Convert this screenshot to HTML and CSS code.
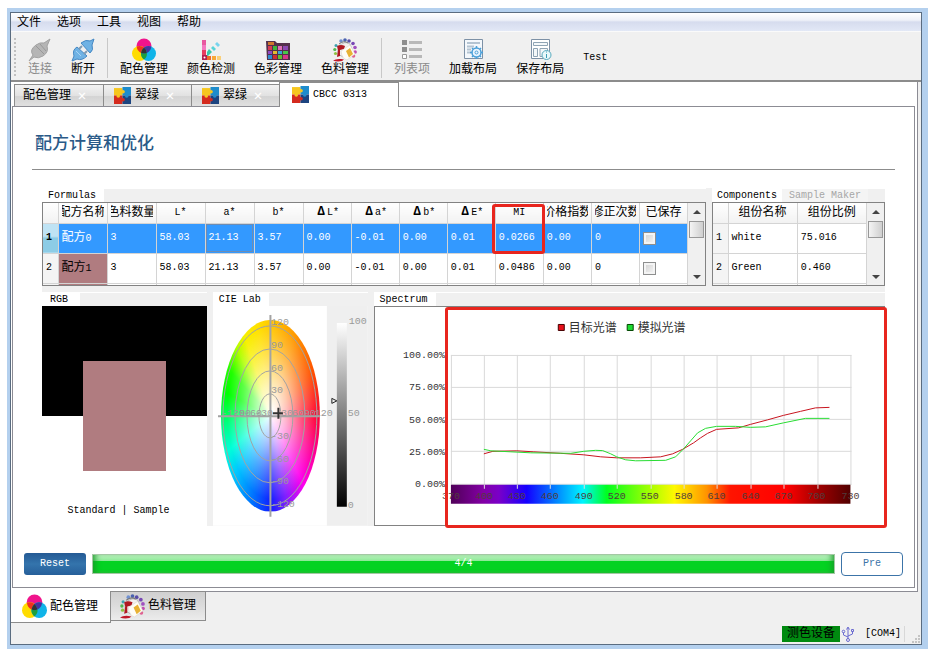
FILE: index.html
```html
<!DOCTYPE html>
<html lang="zh-CN">
<head>
<meta charset="utf-8">
<title>配色管理</title>
<link rel="stylesheet" href="styles.css">
</head>
<body>
<svg class="defs" width="0" height="0" aria-hidden="true">
  <symbol id="rgb" viewBox="0 0 24 24">
    <circle cx="12" cy="8" r="7.5" fill="#f0148c"/>
    <circle cx="7.5" cy="15.5" r="7.5" fill="#ffdc00"/>
    <circle cx="16.500" cy="15.500" r="7.500" fill="#10b4e8"/>
    <path d="M4.800 8.500A7.500 7.500 0 0 1 12 9.500 7.500 7.500 0 0 0 9.100 14.900 7.500 7.500 0 0 1 4.800 8.500z" fill="#f0321e"/>
    <path d="M19.200 8.500A7.500 7.500 0 0 0 12 9.500 7.500 7.500 0 0 1 14.900 14.900 7.500 7.500 0 0 0 19.200 8.500z" fill="#4632a0"/>
    <path d="M9.100 14.900A7.500 7.500 0 0 0 12 21.500 7.500 7.500 0 0 0 14.900 14.900 7.500 7.500 0 0 1 9.100 14.900z" fill="#1ea03c"/>
    <path d="M12 9.500A7.500 7.500 0 0 1 14.900 14.900 7.500 7.500 0 0 1 9.100 14.900 7.500 7.500 0 0 1 12 9.500z" fill="#333"/>
  </symbol>
  <symbol id="puzzle" viewBox="0 0 16 16">
    <path d="M0 1h8v7H0z" fill="#f6c61e"/>
    <path d="M8 0h8v8H8z" fill="#1e8ccc"/>
    <path d="M0 8h8v8H0z" fill="#d42a1e"/>
    <path d="M8 8h8v8H8z" fill="#1c4480"/>
    <circle cx="8.500" cy="4.500" r="1.700" fill="#f6c61e"/>
    <circle cx="12" cy="8.500" r="1.700" fill="#1e8ccc"/>
    <circle cx="4" cy="8.500" r="1.700" fill="#f6c61e"/>
    <circle cx="8.500" cy="12" r="1.700" fill="#d42a1e"/>
  </symbol>
  <symbol id="paint" viewBox="0 0 24 24">
    <g><circle cx="8" cy="3" r="1.800" fill="#7090d0"/><circle cx="12" cy="2" r="1.800" fill="#4a62b0"/><circle cx="16" cy="3" r="1.800" fill="#584ca8"/><circle cx="20" cy="5.500" r="1.800" fill="#7848b4"/><circle cx="22" cy="9.500" r="1.800" fill="#a050c0"/><circle cx="22.200" cy="14" r="1.700" fill="#c44cb0"/><circle cx="20.500" cy="18" r="1.800" fill="#e06090"/><circle cx="3" cy="7.500" r="1.500" fill="#40a0b0"/><circle cx="1.800" cy="11.500" r="1.600" fill="#50b850"/><circle cx="2.500" cy="15.500" r="1.600" fill="#90c040"/></g>
    <path d="M5 9q7-7 12-3l2 5-9 8-5-3z" fill="#f2f0ee" stroke="#999" stroke-width=".6"/>
    <path d="M4 8q4-2 8 0l-1 3-4 1v6l-3 1 1-7z" fill="#b01822"/>
    <path d="M8 13l9-6 5 9-8 6q-5-1-6-9z" fill="#fffdf6" stroke="#d4d0c8" stroke-width=".5"/>
    <path d="M13 13l4-3 3 6-4 3.500z" fill="#e8b234"/>
    <path d="M0 22.500q3-2 8-1.500l3 .5-2 1.500q-5 1-9-.5z" fill="#c01828"/>
    <path d="M6 6q5-4 9-1" fill="none" stroke="#777"/>
  </symbol>
</svg>

<div class="window">
  <nav class="menubar">
    <button>文件</button><button>选项</button><button>工具</button><button>视图</button><button>帮助</button>
  </nav>

  <div class="toolbar">
    <span class="handle"></span>
    <button class="tool" disabled>
      <svg viewBox="0 0 24 24"><path d="M1 23l4-6q-4-5 3-10 4-3 8-2l6-4-3 7q2 6-4 10-5 3-9 1z" fill="#b5b5b5" stroke="#a2a2a2"/><path d="M8 8l8 8M12 6l6 7" stroke="#989898"/></svg>
      连接</button>
    <button class="tool">
      <svg viewBox="0 0 24 24"><path d="M1 23l2-5q-2-6 3-9l10 9q-5 5-10 3z" fill="#6fb2e4" stroke="#4588c4"/><path d="M23 1l-2 6q2 5-2 8L10 5q5-4 9-2z" fill="#6fb2e4" stroke="#4588c4"/><path d="M8 11l3-3M13 16l3-3" stroke="#7f9cb5" stroke-width="2"/><path d="M5 13l5 5" stroke="#a8d4f4"/></svg>
      断开</button>
    <span class="sep"></span>
    <button class="tool"><svg><use href="#rgb"/></svg>配色管理</button>
    <button class="tool">
      <svg viewBox="0 0 24 24"><path d="M3 2h4v5H3z" fill="#e858a0"/><path d="M3 7h4v5H3z" fill="#f478c0"/><path d="M3 12h4v5H3z" fill="#e83c60"/><path d="M3 17h5v5H3z" fill="#b41e50"/><path d="M8 14l2-3 3 3-4 4H8z" fill="#3cc8a8"/><path d="M12 10l2-2 3 3-2 2z" fill="#58d4d8"/><path d="M16 6l2-2 3 3-2 2z" fill="#78d4ee"/><path d="M8 18h4v4H8z" fill="#f06c28"/><path d="M13 18h4v4h-4z" fill="#f8a838"/><path d="M18 18h4v4h-4z" fill="#fad07a"/><circle cx="5.500" cy="19.500" r="1" fill="#fff"/></svg>
      颜色检测</button>
    <button class="tool">
      <svg viewBox="0 0 24 24"><path d="M0 3h9l2 2h13v17H1z" fill="#54304c"/><path d="M2 4h6v3H2z" fill="#d0782c"/><path d="M2 8h4v4H2z" fill="#d83c54"/><path d="M7 8h4v4H7z" fill="#3cb83c"/><path d="M12 8h4v4h-4z" fill="#e070b8"/><path d="M17 8h5v4h-5z" fill="#8c48b4"/><path d="M2 13h4v3H2z" fill="#9048c0"/><path d="M7 13h4v3H7z" fill="#e0bc30"/><path d="M12 13h4v3h-4z" fill="#38a8d8"/><path d="M17 13h5v3h-5z" fill="#48c848"/><path d="M2 17h4v4H2z" fill="#308cd0"/><path d="M7 17h4v4H7z" fill="#cc3030"/><path d="M12 17h4v4h-4z" fill="#60c030"/><path d="M17 17h5v4h-5z" fill="#d83888"/></svg>
      色彩管理</button>
    <button class="tool"><svg><use href="#paint"/></svg>色料管理</button>
    <span class="sep"></span>
    <button class="tool" disabled>
      <svg viewBox="0 0 24 24"><path d="M2 2h5v5H2zM2 9h5v5H2z" fill="#8e8e8e"/><path d="M2.500 16.500h4v4h-4z" fill="#fff" stroke="#999"/><path d="M9 4.500h13M9 11.500h13M9 18.500h13" stroke="#b8b8b8" stroke-width="3"/></svg>
      列表项</button>
    <button class="tool">
      <svg viewBox="0 0 24 24"><path d="M3.500 1.500h18v19h-18z" fill="#f4f8fc" stroke="#7d91a6"/><path d="M6 5h13M6 8.500h7M6 11.500h4M6 14.500h4" stroke="#b4c4d2" stroke-width="2"/><circle cx="15.500" cy="14.500" r="4.500" fill="#eaf5ff" stroke="#4a9fd8" stroke-width="1.500"/><circle cx="15.500" cy="14.500" r="1.500" fill="none" stroke="#4a9fd8"/><path d="M15.500 8v2M15.500 19v2M9 14.500h2M20 14.500h2M11 10l1 1M19 18l1 1M20 10l-1 1M11 19l1-1" stroke="#4a9fd8" stroke-width="1.500"/></svg>
      加载布局</button>
    <button class="tool">
      <svg viewBox="0 0 24 24"><path d="M3.500 1.500h18v19h-18z" fill="#fff" stroke="#7d91a6"/><path d="M5.500 4.500h14v3h-14zM5.500 10.500h4v8h-4zM12 10.500h7.500v8H12z" fill="#f4f8fa" stroke="#8fa4b4"/><circle cx="18.500" cy="17" r="4.500" fill="#e8f8fa" stroke="#58aabe"/><path d="M18.500 16v4M18.500 13.500v1" stroke="#3c9cb4"/></svg>
      保存布局</button>
    <button class="tool en">Test</button>
  </div>

  <div class="outer">
    <div class="tabs">
      <button class="tab text-only">配色管理<i>✕</i></button>
      <button class="tab"><svg><use href="#puzzle"/></svg>翠绿<i>✕</i></button>
      <button class="tab"><svg><use href="#puzzle"/></svg>翠绿<i>✕</i></button>
      <button class="tab active"><svg><use href="#puzzle"/></svg><span class="en">CBCC 0313</span></button>
    </div>

    <main class="pane">
      <h1>配方计算和优化</h1>
      <div class="dock">
        <div class="dock-row">
          <section class="formulas">
            <h2><span>Formulas</span></h2>
            <div class="frame">
              <table>
                <colgroup><col class="c-num"><col class="c-wide"><col class="c-wide"><col class="c-wide"><col class="c-wide"><col class="c-wide"><col><col><col><col><col><col><col><col></colgroup>
                <thead><tr><th></th><th class="zh"><div>配方名称</div></th><th class="zh"><div>色料数量</div></th><th>L*</th><th>a*</th><th>b*</th><th><b class="delta">Δ</b>L*</th><th><b class="delta">Δ</b>a*</th><th><b class="delta">Δ</b>b*</th><th><b class="delta">Δ</b>E*</th><th class="marked">MI<span class="mark"></span></th><th class="zh"><div>价格指数</div></th><th class="zh"><div>修正次数</div></th><th class="zh"><div>已保存</div></th></tr></thead>
                <tbody>
                  <tr class="selected"><th>1</th><td><span class="zh">配方</span>0</td><td>3</td><td>58.03</td><td class="current">21.13</td><td>3.57</td><td>0.00</td><td>-0.01</td><td>0.00</td><td>0.01</td><td>0.0266</td><td>0.00</td><td>0</td><td><input type="checkbox" aria-label="已保存 配方0"></td></tr>
                  <tr><th>2</th><td class="swatch"><span class="zh">配方</span>1</td><td>3</td><td>58.03</td><td>21.13</td><td>3.57</td><td>0.00</td><td>-0.01</td><td>0.00</td><td>0.01</td><td>0.0486</td><td>0.00</td><td>0</td><td><input type="checkbox" aria-label="已保存 配方1"></td></tr>
                  <tr class="cut"><th></th><td class="swatch"></td><td></td><td></td><td></td><td></td><td></td><td></td><td></td><td></td><td></td><td></td><td></td><td></td></tr>
                </tbody>
              </table>
              <div class="scroll"><b class="up"></b><b class="thumb"></b><b class="down"></b></div>
            </div>
          </section>
          <section class="components">
            <h2><span>Components</span><span class="off">Sample Maker</span></h2>
            <div class="frame">
              <table>
                <colgroup><col class="c-num"><col><col></colgroup>
                <thead><tr><th></th><th class="zh">组份名称</th><th class="zh">组份比例</th></tr></thead>
                <tbody>
                  <tr><th>1</th><td>white</td><td>75.016</td></tr>
                  <tr><th>2</th><td>Green</td><td>0.460</td></tr>
                  <tr class="cut"><th></th><td></td><td></td></tr>
                </tbody>
              </table>
              <div class="scroll"><b class="up"></b><b class="thumb"></b><b class="down"></b></div>
            </div>
          </section>
        </div>

        <div class="dock-row">
          <section class="rgb">
            <h2><span>RGB</span></h2>
            <div class="rgb-body">
              <div class="standard"></div>
              <div class="sample"></div>
              <p>Standard | Sample</p>
            </div>
          </section>
          <section class="lab">
            <h2><span>CIE Lab</span></h2>
            <svg class="lab-chart" viewBox="0 0 155 220">
              <defs><linearGradient id="lum" x2="0" y2="1"><stop offset="0" stop-color="#fff"/><stop offset="1" stop-color="#000"/></linearGradient></defs>
              <path d="M0 0h155v220H0z" fill="#fff"/>
              <path d="M114 0h41v220h-41z" fill="#efefef"/>
              <g transform="translate(8 14) scale(.516 1)"><foreignObject width="192" height="192"><div class="wheel"></div></foreignObject></g>
              <g fill="none" stroke="#a3a3a3">
                <ellipse cx="57" cy="110" rx="11" ry="22"/><ellipse cx="57" cy="110" rx="23" ry="45"/><ellipse cx="57" cy="110" rx="35" ry="67"/><ellipse cx="57" cy="110" rx="47" ry="90"/>
                <path d="M57.500 9v202M5 110.500h102" stroke-width="2"/>
              </g>
              <g class="lab-text">
                <text x="58" y="19">120</text><text x="58" y="42">90</text><text x="58" y="65">60</text><text x="58" y="87">30</text>
                <text x="58" y="133">-30</text><text x="58" y="156">-60</text><text x="58" y="178">-90</text><text x="58" y="201">-120</text>
                <text x="8" y="110">-120</text><text x="20" y="110">-90</text><text x="31" y="110">-60</text><text x="42" y="110">-30</text>
                <text x="68" y="110">30</text><text x="79" y="110">60</text><text x="91" y="110">90</text><text x="102" y="110">120</text>
                <text x="136" y="18">100</text><text x="135" y="110">50</text><text x="135" y="202">0</text>
              </g>
              <path d="M60 107.500h10M65.500 102v11" stroke="#333" stroke-width="2"/>
              <path d="M124 17h10v184h-10z" fill="url(#lum)"/>
              <path d="M119 92.500l5 2.500-5 2.500z" fill="none" stroke="#222"/>
            </svg>
          </section>
          <section class="spectrum">
            <h2><span>Spectrum</span></h2>
            <div class="spectrum-body">
              <svg viewBox="0 0 510 218">
                <defs><linearGradient id="spec"><stop offset="0" stop-color="#500058"/><stop offset=".08" stop-color="#8200a4"/><stop offset=".12" stop-color="#7a00c8"/><stop offset=".19" stop-color="#1400ff"/><stop offset=".27" stop-color="#0090ff"/><stop offset=".33" stop-color="#00f4ff"/><stop offset=".39" stop-color="#00ff20"/><stop offset=".5" stop-color="#a8ff00"/><stop offset=".56" stop-color="#fff800"/><stop offset=".64" stop-color="#ff9400"/><stop offset=".7" stop-color="#ff1400"/><stop offset=".84" stop-color="#f00"/><stop offset=".92" stop-color="#a00000"/><stop offset="1" stop-color="#500000"/></linearGradient></defs>
                <path d="M76 48.500h401M76 80.500h401M76 112.500h401M76 144.500h401M76 177.500h401M76.500 48v130M109.500 48v130M142.500 48v130M175.500 48v130M209.500 48v130M242.500 48v130M276.500 48v130M309.500 48v130M342.500 48v130M376.500 48v130M409.500 48v130M443.500 48v130M476.500 48v130" stroke="#d9d9d9"/>
                <path d="M76 178h400v19H76z" fill="url(#spec)"/>
                <path d="M109.500 178v4M142.500 178v4M175.500 178v4M209.500 178v4M242.500 178v4M276.500 178v4M309.500 178v4M342.500 178v4M376.500 178v4M409.500 178v4M443.500 178v4" stroke="#ddd"/>
                <polyline points="109,147 118,144.500 142,144 159,145 186,146.500 209,148 226,150 242,151 266,151 286,150 298,147 308,142.500 319,136 326,131 333,126.500 342,122.500 364,121 376,117.500 393,113 409,108.500 426,104.500 441,101 455,100.500" fill="none" stroke="#c8141e"/>
                <polyline points="109,142.500 116,144 136,145 156,146 196,146.500 209,144.500 221,143.500 228,143.800 236,147 242,150 251,153 261,154 291,153.500 301,150 309,142 316,134 323,126 331,121.500 342,119.500 361,119.500 376,120.500 391,120 409,116 431,111.500 455,111.500" fill="none" stroke="#28dc32"/>
                <path d="M183.500 17.500h6v6h-6z" fill="#e60f19" stroke="#400"/>
                <path d="M252.500 17.500h6v6h-6z" fill="#1edc32" stroke="#040"/>
                <g class="legend"><text x="194" y="25">目标光谱</text><text x="263" y="25">模拟光谱</text></g>
                <g class="axis-y"><text x="70" y="51">100.00%</text><text x="70" y="83">75.00%</text><text x="70" y="116">50.00%</text><text x="70" y="148">25.00%</text><text x="70" y="180">0.00%</text></g>
                <g class="axis-x"><text x="76" y="192">370</text><text x="109" y="192">400</text><text x="142" y="192">430</text><text x="175" y="192">460</text><text x="209" y="192">490</text><text x="242" y="192">520</text><text x="275" y="192">550</text><text x="309" y="192">580</text><text x="342" y="192">610</text><text x="376" y="192">640</text><text x="409" y="192">670</text><text x="442" y="192">700</text><text x="476" y="192">730</text></g>
              </svg>
              <span class="mark"></span>
            </div>
          </section>
        </div>
      </div>

      <div class="actions">
        <button class="reset">Reset</button>
        <div class="progress" role="progressbar" aria-valuenow="4" aria-valuemax="4">4/4</div>
        <button class="pre">Pre</button>
      </div>
    </main>
  </div>

  <div class="bottom-tabs">
    <button class="btab active"><svg><use href="#rgb"/></svg>配色管理</button>
    <button class="btab"><svg><use href="#paint"/></svg>色料管理</button>
  </div>

  <footer class="status">
    <span class="device">测色设备</span>
    <svg viewBox="0 0 16 16"><g fill="none" stroke="#6a6ad0"><path d="M8 2v11M8 11L3.500 9V6.500M8 10l4.500-2V5.500M6.500 3.500L8 1l1.500 2.500"/><circle cx="8" cy="14" r="1.500"/><circle cx="3.500" cy="5.500" r="1.300"/><path d="M11.500 3.500h2v2h-2z"/></g></svg>
    <span class="port">[COM4]</span>
    <svg class="grip" viewBox="0 0 10 10"><path d="M7 1h2v2H7zM4 4h2v2H4zM7 4h2v2H7zM1 7h2v2H1zM4 7h2v2H4zM7 7h2v2H7z" fill="#c4c4c4"/></svg>
  </footer>
</div>
</body>
</html>
```
FILE: styles.css
```css
* { box-sizing: border-box; }

body {
  margin: 0;
  padding: 8px 4px 16px 7px;
  background: #fff;
  color: #000;
  font: 12px/16px "Liberation Mono", "Noto Sans CJK SC", monospace;
}

button {
  margin: 0;
  padding: 0;
  border: 0;
  background: none;
  color: inherit;
  font: inherit;
}

svg { display: block; }
.defs { position: absolute; }
.en { font-size: 10px; }
.zh { font-size: 12px; }

.window {
  border: solid #b4d0ee;
  border-width: 4px 6px 4px 3px;
  background: #f0f0f0;
  box-shadow: inset 0 0 0 1px #5a6c80;
  padding: 1px;
}

/* menu and toolbar */
.menubar {
  display: flex;
  gap: 16px;
  height: 18px;
  padding: 2px 0 0 6px;
  align-items: center;
  background: linear-gradient(#fff, #eef1f8 40%, #d6dcee 50%, #e2e8f6);
}

.toolbar {
  display: flex;
  height: 51px;
  padding: 6px 0 2px 3px;
  border-top: 1px solid #fafafa;
  border-bottom: 2px solid #8c8c8c;
}

.handle {
  width: 2px;
  margin-right: 2px;
  background: repeating-linear-gradient(#c0c0c0 0 2px, transparent 2px 4px);
}

.tool {
  display: flex;
  flex-direction: column;
  align-items: center;
  justify-content: center;
  padding: 0 9px 0 10px;
}
.tool svg { width: 24px; height: 24px; }
.tool:disabled { color: #8a8a8a; }

.sep {
  width: 1px;
  margin: 0 2px 0 3px;
  background: #c8c8c8;
}

/* document tabs */
.outer {
  margin-right: 3px;
  border: solid #8c8c94;
  border-width: 0 1px 1px 0;
  background: #fff;
  padding: 0 2px 3px 1px;
}

.tabs {
  display: flex;
  align-items: flex-end;
  padding-left: 2px;
}

.tab {
  display: flex;
  align-items: center;
  gap: 4px;
  height: 22px;
  padding: 0 16px 0 10px;
  border: 1px solid #8c8c8c;
  border-bottom: 0;
  margin-left: -1px;
  background: linear-gradient(#f2f2f2, #e2e2e2 50%, #d4d4d4 55%, #e0e0e0);
}
.tab.text-only { margin-left: 0; padding-left: 8px; }
.tab svg { width: 17px; height: 17px; }
.tab i { width: 10px; margin-left: 2px; color: #fff; font-style: normal; font-size: 14px; }
.tab.active {
  position: relative;
  height: 25px;
  margin-bottom: -1px;
  padding: 0 31px 1px 12px;
  background: #fff;
}

.pane {
  border: 1px solid #8c8c94;
  padding: 28px 11px 11px;
}

h1 {
  margin: 0 8px 18px;
  padding: 0 3px 14px;
  border-bottom: 1px solid #8c8c8c;
  color: #2a5a88;
  font-size: 17px;
  line-height: 20px;
  font-weight: 500;
}

/* docked panels */
.dock {
  display: grid;
  gap: 6px;
  margin: 0 18px;
  background: #f0f0f0;
}
.dock-row { display: flex; gap: 6px; }
.dock section { min-width: 0; }
.formulas { flex: 664; }
.components { flex: 173; }
.rgb { flex: 165; }
.lab { flex: 155; }
.spectrum { flex: 512; }

h2 {
  display: flex;
  height: 14px;
  margin: 0;
  border-top: 1px solid #fff;
  font-size: 10px;
  line-height: 13px;
  font-weight: 400;
}
h2 span { padding: 0 8px 0 6px; background: #fff; }
h2 .off { padding: 0 7px; background: #f4f4f4; color: #a6a6a6; }
.rgb h2 span { padding: 0 12px 0 8px; }
.components h2 span:first-child { padding: 0 5px; }

.frame {
  display: flex;
  height: 84px;
  overflow: hidden;
  border: 1px solid #828282;
  background: #fff;
}

table {
  flex: 1;
  width: 100%;
  min-width: 0;
  table-layout: fixed;
  border-collapse: collapse;
  font-size: 10px;
  line-height: 16px;
}
.c-num { width: 15px; }
.c-wide { width: 49px; }
th, td { padding: 0 0 0 3px; border: solid #d4d4d4; border-width: 0 1px 1px 0; text-align: left; font-weight: 400; }
thead th { height: 20px; padding: 0 3px; background: linear-gradient(#fff, #f2f2f2); text-align: center; white-space: nowrap; }
thead th.zh { font-size: 12px; }
thead th div { display: flex; justify-content: center; overflow: hidden; }
.delta { display: inline-block; width: 12px; font-size: 12px; }
tbody tr { height: 30px; }
tbody tr.cut { height: 2px; line-height: 1px; }
tbody th { background: #f4f4f4; }
.selected td { background: #3399ff; color: #fff; }
.selected th { background: linear-gradient(#bfe3f4 45%, #8ccce6 50%); font-weight: 700; }
.selected .current { outline: 1px solid #6c8cb4; outline-offset: -2px; }
.swatch { background: #b07c80; }

input[type="checkbox"] {
  display: block;
  appearance: none;
  width: 13px;
  height: 13px;
  margin: 0;
  border: 1px solid #8e8f8f;
  background: linear-gradient(135deg, #cfcfcf, #f8f8f8);
  box-shadow: inset 0 0 0 2px #f4f4f4;
}

.scroll {
  display: flex;
  flex: none;
  flex-direction: column;
  align-items: center;
  width: 17px;
  padding: 7px 0 6px;
  background: #f0f0f0;
}
.up, .down { border: 4px solid transparent; }
.up { border-top: 0; border-bottom-color: #444; }
.down { border-bottom: 0; border-top-color: #444; margin-top: auto; }
.thumb {
  width: 15px;
  height: 17px;
  margin-top: 7px;
  border: 1px solid #989898;
  background: linear-gradient(90deg, #f4f4f4, #cfcfcf);
}

.marked, .spectrum-body { position: relative; }
.mark {
  position: absolute;
  border: 3px solid #e8261e;
  border-radius: 3px;
}
.marked .mark { inset: 1px -2px -31px -4px; }
.spectrum-body .mark { inset: 0 -3px -3px 70px; }

/* colour panels */
.rgb-body { height: 220px; background: #fff; text-align: center; font-size: 10px; }
.standard { height: 110px; background: #000; }
.sample { width: 50%; height: 110px; margin: -55px auto 32px; background: #b07c80; }
p { margin: 0; padding-right: 12px; }

.lab-chart, .spectrum-body svg { width: 100%; }
.wheel {
  width: 192px;
  height: 192px;
  border-radius: 50%;
  background:
    radial-gradient(circle at 52% 48%, #fff 0, rgba(255, 255, 255, .7) 20%, rgba(255, 255, 255, .3) 42%, transparent 62%),
    conic-gradient(#ffc800, #ff9a00 30deg, #ff5000 62deg, #ff0030 90deg, #ff0090 112deg, #f0e 137deg, #8020ff 160deg, #1020ff 180deg, #0070ff 202deg, #00c8ff 230deg, #00ffd8 247deg, #00ff80 265deg, #0f0 285deg, #20ff00 300deg, #b0ff00 316deg, #f8f000 328deg, #ffe000 345deg, #ffc800);
}
.lab-text { font-size: 10px; fill: #999; }

.spectrum-body { border: 1px solid #828282; background: #fff; }
.legend { font-size: 12px; fill: #333; }
.axis-y, .axis-x { font-size: 10px; fill: #333; }
.axis-y { text-anchor: end; }
.axis-x { text-anchor: middle; fill: #503c3c; }

/* action row */
.actions {
  display: flex;
  align-items: center;
  gap: 6px;
  margin-top: 26px;
  font-size: 10px;
}
.reset, .pre { width: 62px; height: 22px; border-radius: 3px; }
.reset { background: linear-gradient(#245a94, #3474ac 50%, #265f9a); color: #fff; }
.pre { height: 24px; border: 1px solid #3c74a8; border-radius: 4px; background: #fff; color: #3c74a8; }
.progress {
  flex: 1;
  height: 20px;
  border: 1px solid #a4c8a4;
  background: linear-gradient(#c4f4c8, #86e890 35%, #04d222 36%, #04d222 80%, #1cc832);
  box-shadow: inset 6px 0 6px -4px #1a9a2a, inset -6px 0 6px -4px #1a9a2a;
  line-height: 18px;
  text-align: center;
  color: #fff;
}

/* window tabs and status bar */
.bottom-tabs { display: flex; align-items: flex-start; margin-top: -1px; }
.btab {
  display: flex;
  align-items: center;
  gap: 3px;
  height: 30px;
  padding: 0 9px;
  border: 1px solid #8c8c8c;
  border-left: 0;
  background: linear-gradient(#d0d0d0, #dcdcdc 50%, #ececec);
}
.btab svg { width: 25px; height: 25px; }
.btab.active { position: relative; height: 32px; padding: 0 12px 0 11px; border-top: 0; background: #fff; }

.status {
  display: flex;
  align-items: center;
  justify-content: flex-end;
  height: 20px;
  margin-top: 1px;
}
.device { padding: 0 5px; background: #008a10; }
.status svg { width: 16px; height: 16px; }
.port { padding: 0 3px 0 9px; border-right: 1px solid #d8d8d8; font-size: 10px; }
.status .grip { width: 10px; height: 10px; align-self: flex-end; margin-left: 6px; }
```
